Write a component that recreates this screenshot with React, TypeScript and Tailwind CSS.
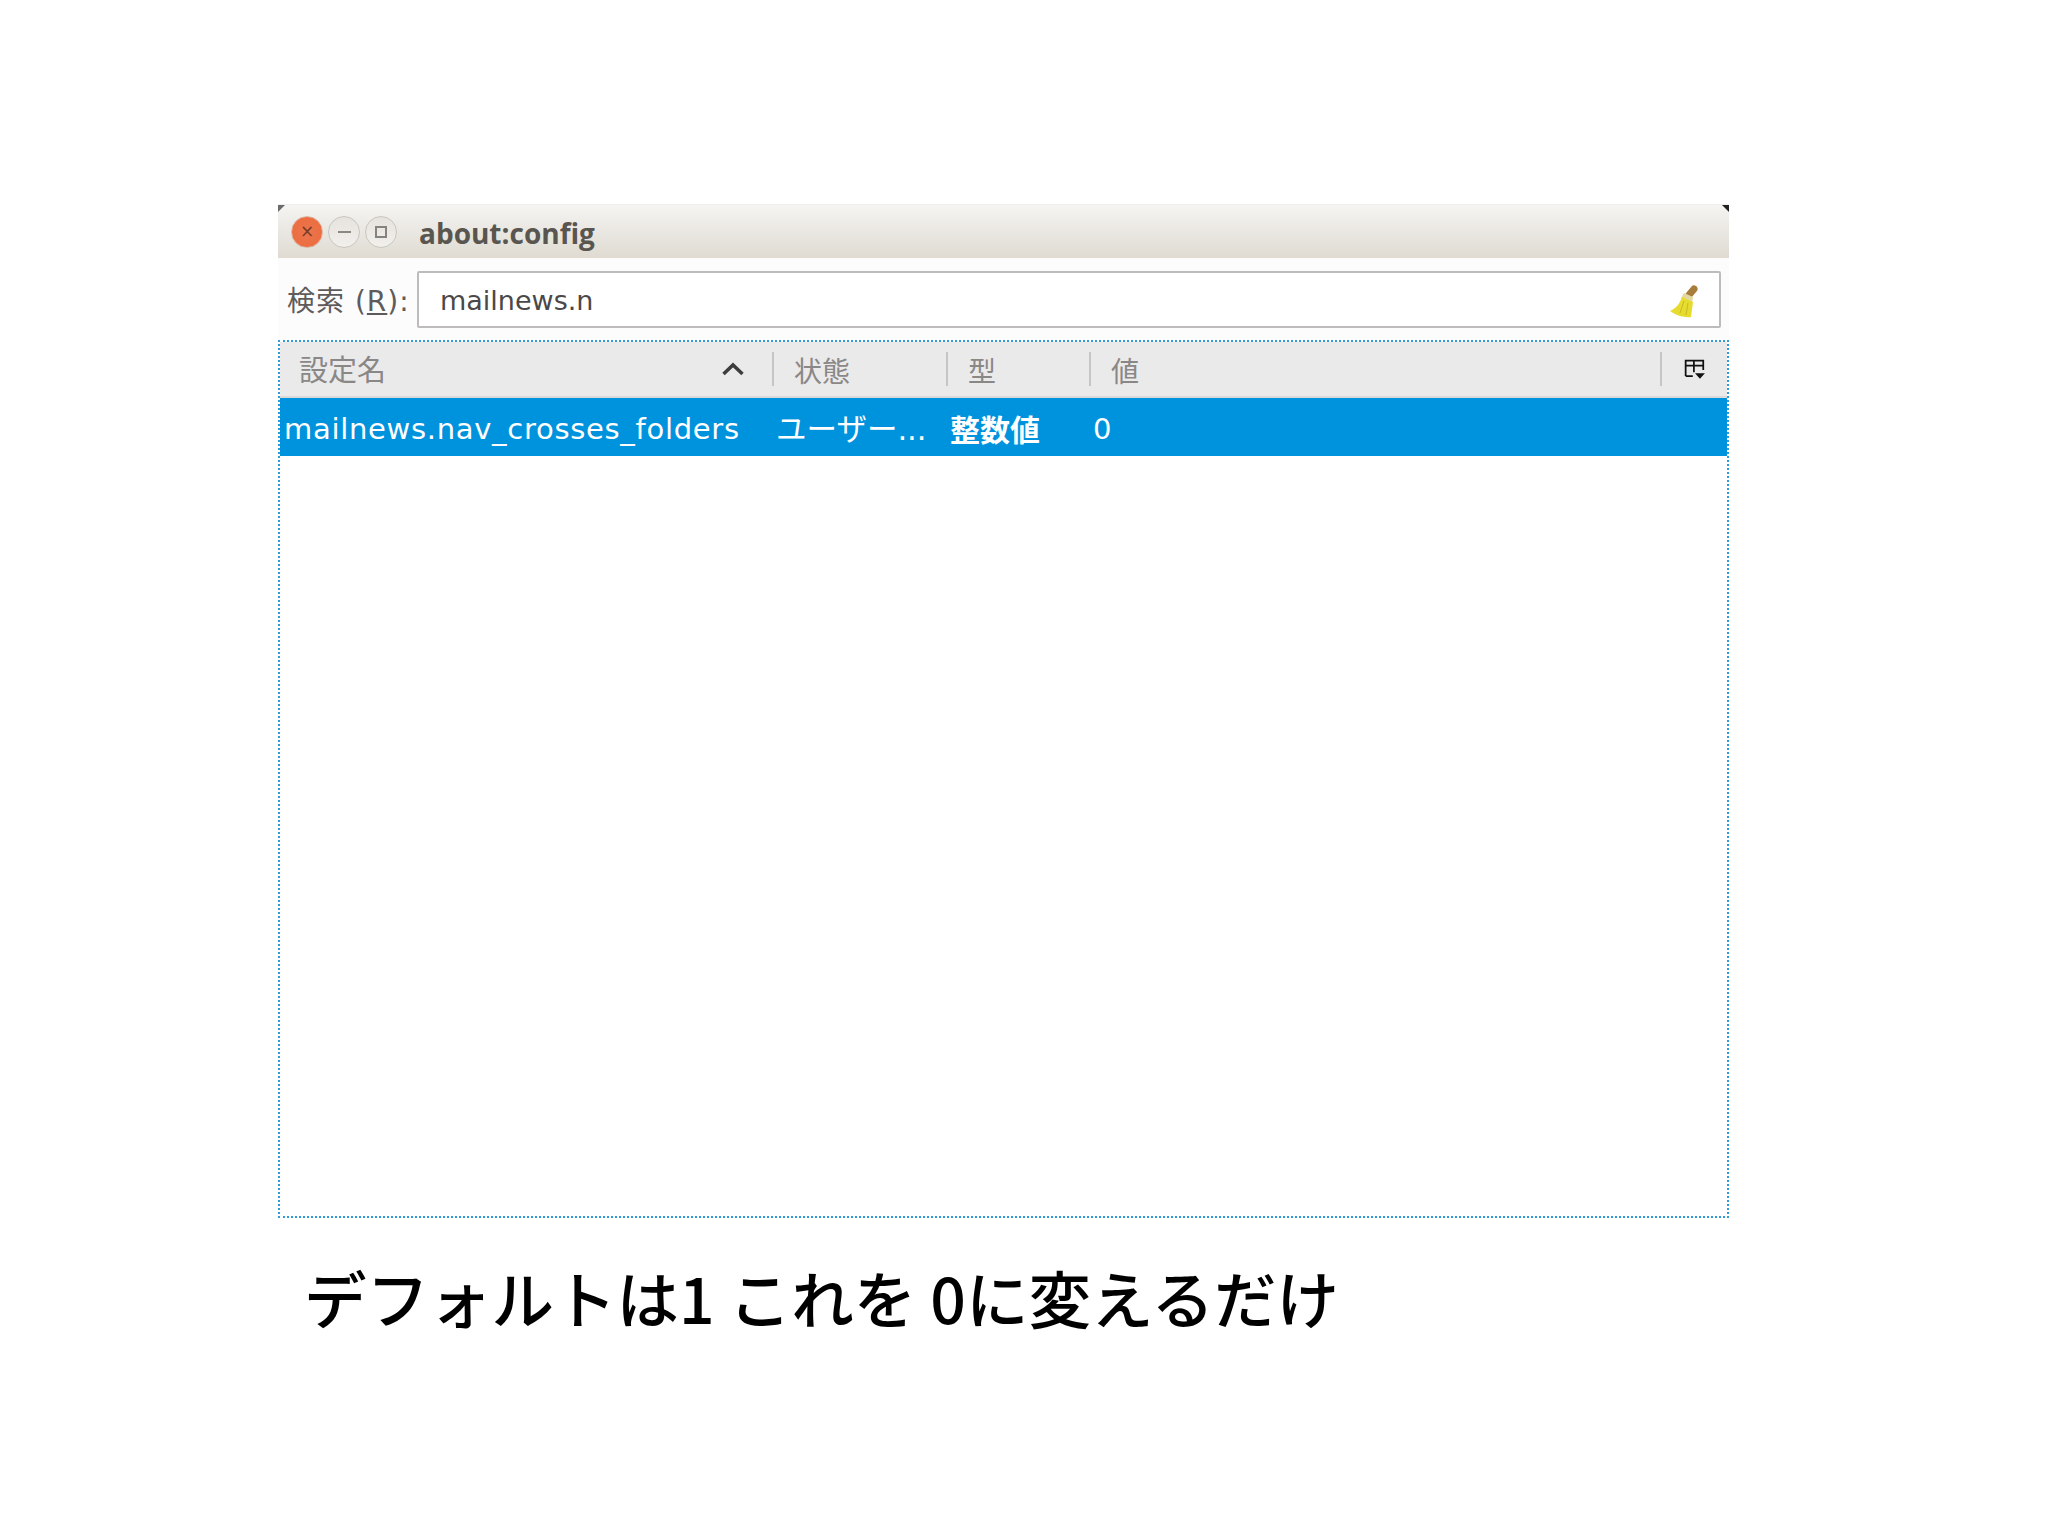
const cjk = "font-['DejaVu_Sans','Noto_Sans_CJK_JP',sans-serif]"

function WindowButton({ children, close }: { children: React.ReactNode; close?: boolean }) {
  return (
    <div
      className={`w-[32px] h-[32px] rounded-full flex items-center justify-center border ${
        close
          ? "bg-[radial-gradient(circle,#e8764f,#f0693a)] border-[#d9b9a6]"
          : "bg-gradient-to-b from-[#e6e3de] to-[#f2f0ec] border-[#c9c6c0]"
      }`}
    >
      {children}
    </div>
  )
}

function Broom() {
  return (
    <svg width="30" height="34" viewBox="0 0 30 34">
      <path d="M20 10 L25 4" stroke="#a87c3a" strokeWidth="7" strokeLinecap="round" />
      <path d="M15 8 L24 12 L23 18 L12 13 Z" fill="#e3d9a0" />
      <path d="M13 12 L24 17 L22 32 C16 33 8 31 1 26 C6 24 11 19 13 12 Z" fill="#e6dc30" />
      <path d="M15 16 L11 28 M19 18 L17 30" stroke="#c9b820" strokeWidth="1" fill="none" />
    </svg>
  )
}

function ColumnPicker() {
  return (
    <svg width="22" height="22" viewBox="0 0 20 20" fill="none">
      <path d="M1.500 15.500 V1.500 H17.500 V10 M1.500 6 H17.500 M9 1.500 V12 M1.500 15.500 H8" stroke="#111" strokeWidth="1.600" />
      <path d="M10 13 H19 L14.500 18 Z" fill="#111" />
    </svg>
  )
}

function HeaderCell({ width, label }: { width: string; label: string }) {
  return (
    <div className={`${width} h-full flex items-center`}>
      <div className="w-[2px] h-[34px] bg-[#c6c5c5]" />
      <span className="ml-[20px] pt-[7px] text-[28px] text-[#8a8787]">{label}</span>
    </div>
  )
}

export default function App() {
  return (
    <div className={`w-[2048px] h-[1535px] bg-white pt-[204px] pl-[278px] ${cjk}`}>
      <div className="w-[1451px]">
        {/* title bar */}
        <div className="relative h-[54px] border-t border-[#eeeeec] bg-gradient-to-b from-[#f5f4f2] to-[#dfdbd2] flex items-center pl-[13px] gap-[5px]">
          <svg className="absolute left-0 top-0" width="7" height="7" viewBox="0 0 7 7">
            <path d="M0 0 H7 L0 7 Z" fill="#6b6b6b" />
          </svg>
          <svg className="absolute right-0 top-0" width="7" height="7" viewBox="0 0 7 7">
            <path d="M0 0 H7 V7 Z" fill="#222222" />
          </svg>
          <WindowButton close>
            <span className="text-[#7a3a22] text-[17px] leading-none">×</span>
          </WindowButton>
          <WindowButton>
            <div className="w-[13px] h-[2px] bg-[#8a8883]" />
          </WindowButton>
          <WindowButton>
            <div className="w-[12px] h-[12px] border-2 border-[#85837e]" />
          </WindowButton>
          <span className="ml-[17px] pt-[2px] font-['Open_Sans',sans-serif] font-bold text-[28px] text-[#59554f]">about:config</span>
        </div>

        {/* search row */}
        <div className="h-[82px] flex items-center pl-[9px] pr-[8px] bg-[#fdfcfc]">
          <span className="text-[28px] pt-[6px] tracking-[1px] text-[#5d5b5b] w-[130px] whitespace-nowrap">
            検索 (<span className="underline">R</span>):
          </span>
          <div className="flex-1 h-[57px] border-2 border-[#bdbbbb] rounded-[2px] bg-white flex items-center justify-between pl-[21px] pr-[20px]">
            <span className="text-[27px] pt-[5px] text-[#4a4848] font-['DejaVu_Sans',sans-serif]">mailnews.n</span>
            <div className="pt-[5px]">
              <Broom />
            </div>
          </div>
        </div>

        {/* tree */}
        <div className="h-[878px] border-2 border-dotted border-[#2f9bd8]">
          <div className="h-[56px] bg-[#ebeaeb] border-b-2 border-[#dcd9d8] flex items-center">
            <div className="w-[492px] h-full flex items-center justify-between pl-[19px] pr-[27px]">
              <span className="text-[29px] pt-[6px] text-[#8a8787]">設定名</span>
              <svg width="24" height="16" viewBox="0 0 24 16" fill="none">
                <path d="M2.500 13 L12 4 L21.500 13" stroke="#3d3d3d" strokeWidth="3.500" />
              </svg>
            </div>
            <HeaderCell width="w-[174px]" label="状態" />
            <HeaderCell width="w-[143px]" label="型" />
            <HeaderCell width="w-[571px]" label="値" />
            <div className="flex-1 h-full flex items-center">
              <div className="w-[2px] h-[34px] bg-[#c6c5c5]" />
              <div className="ml-[22px] pt-[2px]">
                <ColumnPicker />
              </div>
            </div>
          </div>
          <div className="h-[58px] bg-[#0093dd] flex items-center text-white text-[27px] pt-[6px]">
            <div className="w-[492px] pl-[4px] tracking-[0.700px] text-[29px] whitespace-nowrap">mailnews.nav_crosses_folders</div>
            <div className="w-[174px] pl-[4px] whitespace-nowrap text-[30.500px]">ユーザー...</div>
            <div className="w-[143px] pl-[4px] font-bold text-[30px]">整数値</div>
            <div className="pl-[4px] text-[29px]">0</div>
          </div>
        </div>

        {/* caption */}
        <div className="mt-[37px] pl-[26px] text-[62.500px] leading-[84px] font-medium text-black whitespace-pre font-['Noto_Sans_CJK_JP',sans-serif]">
          デフォルトは1 これを 0に変えるだけ
        </div>
      </div>
    </div>
  )
}
